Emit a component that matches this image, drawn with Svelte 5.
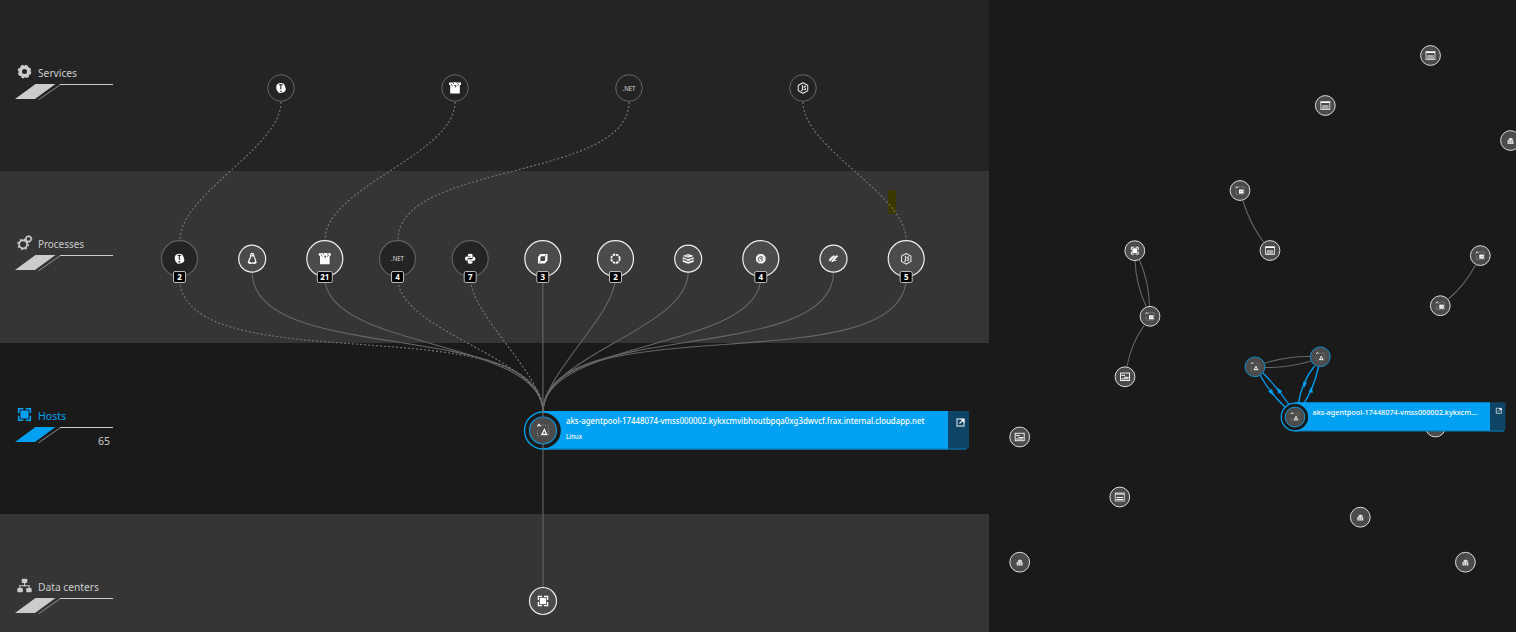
<script>
  const lanes = [
    { name: 'Services', icon: 'gear', width: 39 },
    { name: 'Processes', icon: 'gears', width: 46 },
    { name: 'Hosts', icon: 'host', width: 28, active: true, count: 65 },
    { name: 'Data centers', icon: 'tree', width: 61 }
  ];

  const services = [
    { x: 281, icon: 'bubble', to: 180 },
    { x: 455, icon: 'gopher', to: 325 },
    { x: 629, icon: 'net', to: 398 },
    { x: 803, icon: 'node', to: 906 }
  ];

  const processes = [
    { x: 179.5, icon: 'bubble', n: 2, dark: true },
    { x: 252.2, icon: 'linux' },
    { x: 324.8, icon: 'gopher', n: 21 },
    { x: 397.5, icon: 'net', n: 4, dark: true },
    { x: 470.2, icon: 'python', n: 7, dark: true },
    { x: 542.8, icon: 'cube', n: 3 },
    { x: 615.5, icon: 'ring', n: 2 },
    { x: 688.2, icon: 'stack' },
    { x: 760.8, icon: 'hexagon', n: 4 },
    { x: 833.5, icon: 'blades' },
    { x: 906.2, icon: 'node', n: 5 }
  ];

  const pins = [
    { x: 1430.5, y: 55.5, icon: 'window' },
    { x: 1325.3, y: 105.5, icon: 'window' },
    { x: 1510.5, y: 140.5, icon: 'city' },
    { x: 1240, y: 190.5, icon: 'vm' },
    { x: 1270, y: 250.5, icon: 'window' },
    { x: 1134.8, y: 250.7, icon: 'host' },
    { x: 1150, y: 316.3, icon: 'vm' },
    { x: 1125, y: 376.8, icon: 'form' },
    { x: 1480.3, y: 255.6, icon: 'vm' },
    { x: 1440.3, y: 305.7, icon: 'vm' },
    { x: 1019.7, y: 437, icon: 'form' },
    { x: 1119.8, y: 497, icon: 'window' },
    { x: 1019.7, y: 562.2, icon: 'city' },
    { x: 1360.3, y: 517.2, icon: 'city' },
    { x: 1465.4, y: 562.2, icon: 'city' },
    { x: 1435.5, y: 427, icon: 'none' }
  ];

  // The farther apart two nodes are, the harder their link bends.
  const link = (x1, y1, x2, y2) => {
    const bend = (0.15 + Math.abs(x2 - x1) * 0.0018) * (y2 - y1);
    return `M${x1} ${y1}C${x1} ${y1 + bend} ${x2} ${y2 - bend} ${x2} ${y2}`;
  };
</script>

{#snippet glyph(name)}
  {#if name === 'gear'}
    <circle r="4.2" fill="none" stroke="currentColor" stroke-width="3.4" />
    <circle r="6" fill="none" stroke="currentColor" stroke-width="1.6" stroke-dasharray="2.9 1.81" />
  {:else if name === 'gears'}
    <circle cx="-1.4" cy="1.8" r="4" fill="none" stroke="currentColor" stroke-width="1.7" />
    <circle cx="-1.4" cy="1.8" r="5.2" fill="none" stroke="currentColor" stroke-width="1.2" stroke-dasharray="2.1 1.98" />
    <circle cx="4" cy="-3.6" r="2.5" fill="none" stroke="currentColor" stroke-width="1.4" />
    <circle cx="4" cy="-3.6" r="3.3" fill="none" stroke="currentColor" stroke-width="1" stroke-dasharray="1.6 1.36" />
  {:else if name === 'host'}
    <rect x="-4" y="-4" width="8" height="8" fill="currentColor" />
    <path d="M-5.800-1.200V-5.800H-1.200M1.200-5.800H5.800V-1.200M5.800 1.200V5.800H1.200M-1.200 5.800H-5.800V1.200" fill="none" stroke="currentColor" stroke-width="1.600" />
  {:else if name === 'tree'}
    <path d="M0-3V1M-4.7 3V.3H4.7V3" fill="none" stroke="currentColor" stroke-width="1.1" />
    <rect x="-2.8" y="-6.8" width="5.6" height="4.4" rx="1" fill="currentColor" />
    <rect x="-7.2" y="2.5" width="5.5" height="4.2" rx="1" fill="currentColor" />
    <rect x="1.7" y="2.5" width="5.5" height="4.2" rx="1" fill="currentColor" />
  {:else if name === 'bubble'}
    <path d="M-4.8-.4Q-4.8-5 0-5 3.4-5 3.9-2 5.5 1 4.3 3 2.9 4.7.5 4.8-1.5 5.5-2.6 4.2-4.8 3-4.8-.4" fill="#fff" />
    <path d="M-1.900-3Q0-4 1.700-3M-.2-3.5V1.200M-1.200 3.200H.8" fill="none" stroke="#292929" stroke-width="1.1" />
  {:else if name === 'gopher'}
    <path d="M-6-5.5H-3.2Q0-6.1 3.2-5.5H6V-3H4.800V5.500H-4.800V-3H-6Z" fill="#fff" />
    <path d="M-4-3.700L-2.500-2.300M-2-4.500H-1M2.400-4.500H3M4-3.700L2.500-2.300M-.7-2.500H1L.3-.5" stroke="#333" stroke-width=".9" fill="none" />
  {:else if name === 'net'}
    <text x="-6.500" y="2.600" fill="#ddd" font-size="7.200" textLength="13" lengthAdjust="spacingAndGlyphs">.NET</text>
  {:else if name === 'node'}
    <path d="M0-5.3L4.7-2.6V2.7L0 5.3L-4.7 2.7V-2.6Z" fill="none" stroke="#ddd" stroke-width="1.1" />
    <path d="M-.6-2.8V2.2Q-.8 3-2 2.4M3-1.7Q.8-2.2 1-.8 1.3 0 2.7.4 3.2 2.2.7 1.6" fill="none" stroke="#fff" stroke-width="1" />
  {:else if name === 'linux'}
    <path d="M-1.600-3.500Q-1.500-5.500 0-5.300 1.700-5.300 1.500-2.700 3.500.8 3.600 3Q3.200 5 1.500 4.400H-1.500Q-3.800 5-3.700 3 -2.900.5-1.800-1Z" fill="none" stroke="#fff" stroke-width="1.100" />
    <path d="M-4.200 3L-1.600 4.500M4.200 3L1.800 4.500M-.8-3.200H1" stroke="#fff" stroke-width="1.800" />
  {:else if name === 'python'}
    <path d="M-2.3-2V-4Q-2.3-5 0-5T2.4-4V-.6H-1.7Q-3 0-2.8 2H-4Q-5.2 1.7-5.2-.2T-3.5-2.1H.4V-2.6H-2.3" fill="#fff" />
    <path transform="rotate(180)" d="M-2.3-2V-4Q-2.3-5 0-5T2.4-4V-.6H-1.7Q-3 0-2.8 2H-4Q-5.2 1.7-5.2-.2T-3.5-2.1H.4V-2.6H-2.3" fill="#fff" />
  {:else if name === 'cube'}
    <path d="M-4.8-1.7L-2.4-4.8H4.7V1.7L2 4.8H-4.8Z" fill="#fff" />
    <path d="M-2.3-1.4L-1.5-2.4H2.3V1.4L1.5 2.4H-2.3Z" fill="#444" />
    <path d="M2-2.2L3.3-3.8M-2.3 2.4L-3.7 3.7" stroke="#555" stroke-width=".8" />
  {:else if name === 'ring'}
    <circle r="4.2" fill="none" stroke="#fff" stroke-width="1.8" stroke-dasharray="2.5 .8" />
  {:else if name === 'stack'}
    <path d="M0-4.8L5.5-2.8L0-.9L-5.5-2.8ZM-5.5-1.4L0 .6L5.5-1.4V.2L0 2.2L-5.5.2ZM-5.5 1.3L0 3.2L5.5 1.3V3L0 5L-5.5 3Z" fill="#fff" />
    <path d="M-2.5-2.8H1M-4 .5L-1 1.5M4 .5L2 1.3" stroke="#555" stroke-width=".7" />
  {:else if name === 'hexagon'}
    <path d="M-2-4.8H2L4.8-2V2L2 4.8H-2L-4.8 2V-2Z" fill="#eee" />
    <path d="M-1.2 2.8Q-3 1-2-1.2 0-3.3 2.2-1.2M-.7-.1Q.6-1.2 1.6.2L.7 2.5" fill="none" stroke="#555" stroke-width="1" />
  {:else if name === 'blades'}
    <path d="M-4.800 1L.4-3.700 1.500-2-3.800 2.700ZM-2.600 3.100L2.800-3.500 4.800-2.600-.7 3.400Z" fill="#fff" />
    <path d="M-3-1.500H0M.5 1.800H3" stroke="#ddd" />
  {:else if name === 'window'}
    <rect x="-4.5" y="-4" width="9" height="8" fill="none" stroke="#ccc" />
    <path d="M-4.5-3H4.5M-3.2.5H3.2M-3.5 2.5H3.5" stroke="#fff" stroke-width="1.2" />
  {:else if name === 'form'}
    <rect x="-4.5" y="-3.7" width="9" height="7.4" fill="none" stroke="#eee" />
    <path d="M-3.5-1.4H0M-1 .5H3.7M-3.5 2H3.5" stroke="#fff" />
  {:else if name === 'city'}
    <path d="M-3 3.4V-.2H-1.800V-1.800L0-2.800 2.200-2V0H3V3.400Z" fill="#ddd" />
    <path d="M-1.200 3V.2M1.100 3V-.5" stroke="#777" stroke-width=".6" />
  {:else if name === 'vm'}
    <path d="M-1.500-3.700H4.200V3.800H-4V-.7" fill="none" stroke="#888" stroke-width=".8" stroke-dasharray="2 .8" />
    <path d="M-4.400-2.300L-3.200-3.900-1.800-2.500" fill="none" stroke="#eee" />
    <path d="M-1-1H3.500V3H-1Z" fill="#fff" />
    <path d="M.3 1.100H1.100M2.200.2V1" stroke="#555" stroke-width=".8" />
  {:else if name === 'hostvm'}
    <path d="M-1.500-5.300H5.500V5.300H-5.500V0" fill="none" stroke="#888" stroke-width=".8" stroke-dasharray="2 1" />
    <path d="M-5.600-4L-4-6-2.400-4.200" fill="none" stroke="#fff" stroke-width="1.200" />
    <path d="M1.400-1L3.500 3.800H-.9Z" fill="none" stroke="#fff" stroke-width="1.200" />
    <path d="M-1.500 3.300L0 4.100M4.200 3.300L2.700 4.100" fill="none" stroke="#fff" stroke-width="1.200" />
  {:else if name === 'open'}
    <path d="M.5-3.5H-3.5V3.5H3.5V-.5" fill="none" stroke="#a9bdc8" stroke-width="1.4" />
    <path d="M-1 1L2.4-2.400M.8-3.400H3.600V-.6Z" stroke="#fff" stroke-width="1.100" fill="#fff" />
  {/if}
{/snippet}

<main>
  <section class="layers">
    {#each lanes as lane}
      <div class="lane" class:active={lane.active}>
        <svg class="label" width="100" height="56" viewBox="0 0 100 56">
          <g class="title">
            <g transform="translate(9.5 13.5)">{@render glyph(lane.icon)}</g>
            <text x="23" y="19" font-size="11" textLength={lane.width} lengthAdjust="spacingAndGlyphs">{lane.name}</text>
            <path d="M0 41L20.5 26H40.5L20 41Z" />
          </g>
          <path d="M23.5 41.8L45.5 26.5" fill="none" stroke="#999" stroke-width=".9" />
          <path d="M45 26.5H98" stroke="#ccc" />
          {#if lane.count}
            <text x="83" y="44" fill="#ccc" font-size="11" textLength="12" lengthAdjust="spacingAndGlyphs">{lane.count}</text>
          {/if}
        </svg>
      </div>
    {/each}
  </section>
  <section class="map"></section>

  <svg class="canvas" width="1516" height="632" viewBox="0 0 1516 632">
    <rect x="888" y="190" width="8" height="24" fill="#3b3900" />
    <g class="edges">
      {#each services as s}
        <path class="dotted" d={link(s.x, 102, s.to, 240)} />
      {/each}
      {#each processes as p}
        <path class:dotted={p.dark} d={link(p.x, p.n ? 277 : 272, 543, 412)} />
      {/each}
      <path d="M543 412V588" />
      <path d="M1243 201Q1250 224 1263.5 242M1135 261Q1136 284 1146 306M1139.5 260Q1149 282 1149.5 306M1144 325.5Q1131 344 1127 366.500M1475.500 265Q1465 285 1448.500 299M1265 363Q1288 356 1310.500 356.500M1265 367.500Q1288 368 1311 361" />
    </g>

    {#each services as s}
      <circle cx={s.x} cy="88" r="13.3" fill="#242424" stroke="#666" />
      <g transform="translate({s.x} 88)">{@render glyph(s.icon)}</g>
    {/each}

    {#each processes as p}
      <circle cx={p.x} cy="258.700" r={p.n ? 18 : 13.5} fill={p.dark ? '#242424' : '#4b4b4b'} stroke={p.dark ? '#606060' : '#f0f0f0'} stroke-width="1.2" />
      <g transform="translate({p.x} 258.700)">{@render glyph(p.icon)}</g>
      {#if p.n}
        <rect x={p.x - (p.n > 9 ? 7.5 : 6)} y="271.500" width={p.n > 9 ? 15 : 12} height="11" rx="1.500" fill="#000" stroke="#bbb" />
        <text x={p.x} y="280" class="badge">{p.n}</text>
      {/if}
    {/each}

    <circle cx="543" cy="601" r="13.500" fill="#4b4b4b" stroke="#eee" stroke-width="1.200" />
    <g transform="translate(543 601) scale(.8)" color="#fff">{@render glyph('host')}</g>

    {#each pins as p}
      <circle cx={p.x} cy={p.y} r="9.900" fill="#4b4b4b" stroke="#ddd" />
      <g transform="translate({p.x} {p.y})" color="#fff">
        {#if p.icon === 'host'}
          <g transform="scale(.6)">{@render glyph('host')}</g>
        {:else}
          {@render glyph(p.icon)}
        {/if}
      </g>
    {/each}

    <g fill="none" stroke="#00a1f2" stroke-width="1.300">
      <path d="M1260 375Q1270 393 1285 407M1263 373Q1277 387 1290 406M1314.500 366Q1302 381 1298 405M1318.500 367Q1314 388 1303 405" />
      <path d="M1268.500 391.500L1273 395 1272 389.500ZM1282 391.500L1277.500 388 1278.500 393.500ZM1306.500 382.500L1304 387.500 1303.500 382ZM1309 391.500L1311.500 387 1312.500 392.500Z" fill="#00a1f2" stroke-width=".6" />
    </g>
    {#each [[1255, 366.8], [1320.3, 356.8]] as [x, y]}
      <circle cx={x} cy={y} r="9.900" fill="#4b4b4b" stroke="#148ccb" />
      <g transform="translate({x} {y}) scale(.72)">{@render glyph('hostvm')}</g>
    {/each}

    <path d="M543 411H948V449.500H543Z" fill="#00a1f2" />
    <path d="M948 411H969V447L966.500 449.500H948Z" fill="#0e4465" />
    <path d="M543 449H966" stroke="#087bb7" />
    <circle cx="543" cy="430.500" r="18.500" fill="#1a1a1a" stroke="#00a1f2" stroke-width="1.300" />
    <path d="M543 411V417M543 444V449" stroke="#777" />
    <circle cx="543" cy="430.500" r="13.500" fill="#4b4b4b" stroke="#1492d3" stroke-width="1.200" />
    <g transform="translate(543 430.500)">{@render glyph('hostvm')}</g>
    <text x="566" y="423.700" class="host-name" font-size="8.700" textLength="358.500" lengthAdjust="spacingAndGlyphs">aks-agentpool-17448074-vmss000002.kykxcmvibhoutbpqa0xg3dwvcf.frax.internal.cloudapp.net</text>
    <text x="566" y="439" class="host-name" font-size="6.500" textLength="16" lengthAdjust="spacingAndGlyphs">Linux</text>
    <g transform="translate(960.500 422.500)">{@render glyph('open')}</g>

    <path d="M1295 402.300H1490V431H1295Z" fill="#00a1f2" />
    <path d="M1490 402.300H1505.500V429.500L1504 431.500H1490Z" fill="#0e4465" />
    <path d="M1295 431H1504" stroke="#087bb7" />
    <circle cx="1295" cy="417" r="13.800" fill="#1a1a1a" stroke="#00a1f2" stroke-width="1.200" />
    <circle cx="1295" cy="417" r="9.900" fill="#4b4b4b" stroke="#1492d3" />
    <g transform="translate(1295 417) scale(.72)">{@render glyph('hostvm')}</g>
    <text x="1312.500" y="414.500" class="host-name" font-size="7.500" textLength="164.500" lengthAdjust="spacingAndGlyphs">aks-agentpool-17448074-vmss000002.kykxcm...</text>
    <g transform="translate(1498.800 410.800) scale(.72)">{@render glyph('open')}</g>
  </svg>
</main>

<style>
  :global(body) {
    margin: 0;
    background: #1a1a1a;
  }

  main {
    position: relative;
    display: grid;
    grid-template-columns: 989px 1fr;
    width: 1516px;
    height: 632px;
    overflow: hidden;
    background: #1a1a1a;
    font-family: 'Noto Sans', sans-serif;
  }

  .layers {
    display: grid;
    grid-template-rows: 171px 172px 171px 118px;
  }

  .lane {
    box-sizing: border-box;
    padding: 58px 0 0 15px;
    background: #353535;
    color: #ccc;
  }

  .lane:first-child {
    background: #242424;
  }

  .lane:nth-child(3) {
    background: #1a1a1a;
  }

  .lane.active {
    color: #00a1f2;
  }

  .label {
    display: block;
  }

  .title {
    fill: currentColor;
  }

  .canvas {
    position: absolute;
    inset: 0;
  }

  .edges path {
    fill: none;
    stroke: #666;
    stroke-width: 1.1;
  }

  .edges .dotted {
    stroke: #777;
    stroke-dasharray: 2 2;
  }

  .badge {
    fill: #fff;
    font-size: 8px;
    font-weight: 700;
    text-anchor: middle;
  }

  .host-name {
    fill: #fff;
    font-weight: 500;
  }
</style>
